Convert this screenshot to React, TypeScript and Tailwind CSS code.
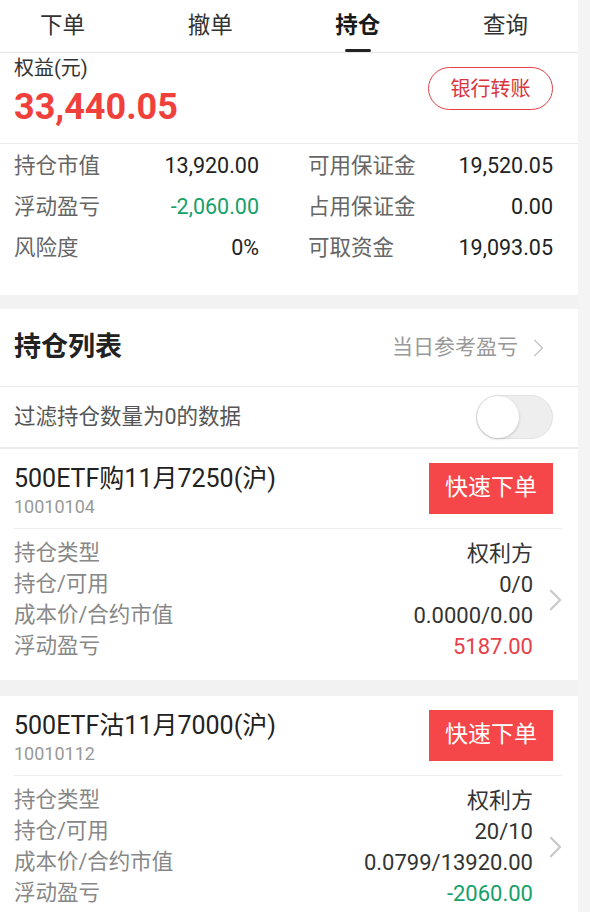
const font = { fontFamily: 'Roboto, "Noto Sans CJK SC", sans-serif' };

const tabs = ["下单", "撤单", "持仓", "查询"];

function Chevron({ className, stroke }: { className: string; stroke: number }) {
  return (
    <svg viewBox="0 0 14 24" className={className} fill="none">
      <path d="M2 2 L12 12 L2 22" stroke="currentColor" strokeWidth={stroke} strokeLinecap="round" strokeLinejoin="round" />
    </svg>
  );
}

function Tabs() {
  return (
    <div className="flex h-[53px] shrink-0 items-center justify-between border-b border-[#e6e6e6] bg-white pl-[40px] pr-[50px]">
      {tabs.map((t) => (
        <div key={t} className="relative flex h-full items-center pb-[1px]">
          <span
            className={
              t === "持仓"
                ? "text-[22.5px] font-bold text-[#1a1a1a]"
                : "text-[22.5px] text-[#333]"
            }
          >
            {t}
          </span>
          {t === "持仓" && (
            <span className="absolute bottom-[0px] left-1/2 h-[3px] w-[26px] -translate-x-1/2 rounded-sm bg-[#222]" />
          )}
        </div>
      ))}
    </div>
  );
}

function Stat({ label, value, color }: { label: string; value: string; color?: string }) {
  return (
    <div className="flex h-[41px] items-center justify-between">
      <span className="text-[21.5px] text-[#666]">{label}</span>
      <span className={"text-[21.5px] " + (color ?? "text-[#222]")}>{value}</span>
    </div>
  );
}

function Account() {
  return (
    <div className="shrink-0 bg-white">
      <div className="flex items-start justify-between pb-[15px] pl-[14px] pr-[25px] pt-[3px]">
        <div className="flex flex-col">
          <span className="text-[20px] leading-[24px] text-[#333]">权益(元)</span>
          <span className="mt-[6px] text-[36px] font-bold leading-[42px] text-[#f0403c]">
            33,440.05
          </span>
        </div>
        <button className="mt-[11px] h-[43px] w-[125px] rounded-full border-[1.5px] border-[#e04046] text-[20px] text-[#d9363e]">
          银行转账
        </button>
      </div>
      <div className="h-px bg-[#ececec]" />
      <div className="grid grid-cols-2 gap-x-[49px] pb-[26px] pl-[14px] pr-[25px] pt-[2px]">
        <div className="flex flex-col">
          <Stat label="持仓市值" value="13,920.00" />
          <Stat label="浮动盈亏" value="-2,060.00" color="text-[#16a06a]" />
          <Stat label="风险度" value="0%" />
        </div>
        <div className="flex flex-col">
          <Stat label="可用保证金" value="19,520.05" />
          <Stat label="占用保证金" value="0.00" />
          <Stat label="可取资金" value="19,093.05" />
        </div>
      </div>
    </div>
  );
}

function Row({ label, value, color }: { label: string; value: string; color?: string }) {
  return (
    <div className="flex h-[31px] items-center justify-between">
      <span className="text-[21.5px] text-[#888]">{label}</span>
      <span className={"text-[22px] " + (color ?? "text-[#333]")}>{value}</span>
    </div>
  );
}

type Position = {
  name: string;
  code: string;
  type: string;
  qty: string;
  cost: string;
  pnl: string;
  pnlColor: string;
};

const positions: Position[] = [
  {
    name: "500ETF购11月7250(沪)",
    code: "10010104",
    type: "权利方",
    qty: "0/0",
    cost: "0.0000/0.00",
    pnl: "5187.00",
    pnlColor: "text-[#e8404a]",
  },
  {
    name: "500ETF沽11月7000(沪)",
    code: "10010112",
    type: "权利方",
    qty: "20/10",
    cost: "0.0799/13920.00",
    pnl: "-2060.00",
    pnlColor: "text-[#16a06a]",
  },
];

function Card({ p }: { p: Position }) {
  return (
    <div className="shrink-0 bg-white pb-[18px]">
      <div className="flex items-start justify-between pl-[14px] pr-[25px] pt-[14px]">
        <div className="flex flex-col">
          <span className="text-[25px] leading-[32px] text-[#222]">{p.name}</span>
          <span className="text-[18px] leading-[24px] text-[#999]">{p.code}</span>
        </div>
        <button className="h-[51px] w-[124px] bg-[#f5474a] text-[23px] text-white">
          快速下单
        </button>
      </div>
      <div className="ml-[14px] mr-[15px] mt-[9px] h-px bg-[#efefef]" />
      <div className="flex items-center pl-[14px] pr-[15px] pt-[9px]">
        <div className="flex flex-1 flex-col">
          <Row label="持仓类型" value={p.type} />
          <Row label="持仓/可用" value={p.qty} />
          <Row label="成本价/合约市值" value={p.cost} />
          <Row label="浮动盈亏" value={p.pnl} color={p.pnlColor} />
        </div>
        <Chevron className="ml-[15px] h-[22px] w-[15px] text-[#c8c8c8]" stroke={2.4} />
      </div>
    </div>
  );
}

export default function App() {
  return (
    <div className="flex h-[912px] overflow-hidden bg-[#f4f4f4]" style={font}>
      <div className="flex w-[578px] flex-col">
        <Tabs />
        <Account />
        <div className="h-[14px] shrink-0 bg-[#f2f2f2]" />
        <div className="shrink-0 bg-white">
          <div className="flex h-[77px] items-center justify-between pl-[14px] pr-[34px]">
            <span className="text-[27px] font-bold text-[#222]">持仓列表</span>
            <span className="flex items-center text-[21px] text-[#999]">
              当日参考盈亏
              <Chevron className="ml-[15px] h-[20px] w-[11px] text-[#c0c0c0]" stroke={1.6} />
            </span>
          </div>
          <div className="h-px bg-[#ececec]" />
          <div className="flex h-[60px] items-center justify-between pl-[14px] pr-[25px]">
            <span className="text-[21.5px] text-[#555]">过滤持仓数量为0的数据</span>
            <div className="flex h-[44px] w-[77px] items-center rounded-full border border-[#e2e2e2] bg-[#eeeeee]">
              <div className="h-[42px] w-[42px] rounded-full bg-white shadow-[0_1px_3px_rgba(0,0,0,0.2)]" />
            </div>
          </div>
          <div className="h-[2px] bg-[#ececec]" />
        </div>
        <Card p={positions[0]} />
        <div className="h-[16px] shrink-0 bg-[#f2f2f2]" />
        <Card p={positions[1]} />
      </div>
    </div>
  );
}
